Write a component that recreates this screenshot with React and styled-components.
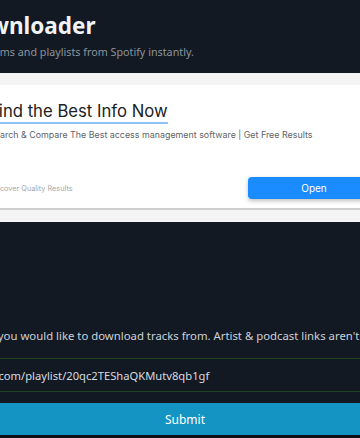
import React from "react";
import styled, { createGlobalStyle } from "styled-components";

const GlobalStyle = createGlobalStyle`
  html, body {
    margin: 0;
    padding: 0;
    background: #131922;
    overflow: hidden;
  }
  body {
    width: 360px;
    height: 438px;
  }
`;

// the screenshot is a window scrolled sideways: the page starts left of the viewport
const Page = styled.div`
  margin-left: -300px;
  width: 970px;
  display: flex;
  flex-direction: column;
  font-family: "Noto Sans", "Open Sans", sans-serif;
`;

const Header = styled.header`
  height: 73px;
  box-sizing: border-box;
  padding: 11px 0 0 175px;
`;

const Title = styled.h1`
  margin: 0;
  font-size: 22.5px;
  line-height: 30px;
  font-weight: 700;
  color: #f0f3f6;
  white-space: nowrap;
`;

const Subtitle = styled.p`
  margin: 2px 0 0 ${(p) => p.shift || 0}px;
  font-size: 10.75px;
  line-height: 18px;
  color: #8b949e;
  white-space: nowrap;
`;

const AdBand = styled.div`
  background: #f4f4f4;
  padding: 12px 278px 12px 0;
`;

const AdCard = styled.div`
  height: 125px;
  box-sizing: border-box;
  background: #fff;
  border-bottom: 2px solid #cfcfcf;
  padding: 16px 12px 9px 289px;
  display: flex;
  flex-direction: column;
  font-family: Inter, Roboto, sans-serif;
`;

const AdTitle = styled.div`
  align-self: flex-start;
  font-size: 16.7px;
  line-height: 20px;
  padding-bottom: 1px;
  color: #202124;
  border-bottom: 2px solid #8cc2f7;
  white-space: nowrap;
`;

const AdText = styled.div`
  margin-top: 4px;
  font-size: 8.9px;
  line-height: 14px;
  color: #5f6368;
  white-space: nowrap;
`;

const AdFooter = styled.div`
  margin-top: auto;
  display: flex;
  align-items: center;
  justify-content: space-between;
`;

const AdSource = styled.span`
  font-size: 7.3px;
  color: #a8a8a8;
  white-space: nowrap;
`;

const OpenButton = styled.button`
  width: 132px;
  height: 22px;
  border: none;
  border-radius: 4px;
  background: #1a8cff;
  color: #fff;
  font-family: Inter, Roboto, sans-serif;
  font-size: 10px;
  box-shadow: 0 2px 4px rgba(0, 0, 0, 0.25);
`;

const Main = styled.main`
  padding-top: 104px;
  display: flex;
  flex-direction: column;
`;

const Label = styled.label`
  padding-left: 12px;
  font-size: 11.35px;
  line-height: 20px;
  color: #c9d1d9;
  white-space: nowrap;
`;

const UrlInput = styled.input`
  margin-top: 12px;
  height: 34px;
  box-sizing: border-box;
  border: none;
  border-top: 1px solid #1f4223;
  border-bottom: 1px solid #1f4223;
  background: #131922;
  color: #d6dbe0;
  font-family: "Noto Sans", "Open Sans", sans-serif;
  font-size: 11.2px;
  padding: 0 0 0 192px;
  outline: none;
`;

const SubmitButton = styled.button`
  margin-top: 11px;
  height: 32px;
  border: none;
  background: #1394c2;
  color: #fff;
  font-family: "Noto Sans", "Open Sans", sans-serif;
  font-size: 12px;
`;

const Bottom = styled.div`
  height: 40px;
  background: #0d1117;
`;

export default function App() {
  return (
    <>
      <GlobalStyle />
      <Page>
        <Header>
          <Title>Spotify Downloader</Title>
          <Subtitle shift={13}>Download songs, albums and playlists from Spotify instantly.</Subtitle>
        </Header>
        <AdBand>
          <AdCard>
            <AdTitle>Find the Best Info Now</AdTitle>
            <AdText>Search &amp; Compare The Best access management software | Get Free Results</AdText>
            <AdFooter>
              <AdSource>Discover Quality Results</AdSource>
              <OpenButton>Open</OpenButton>
            </AdFooter>
          </AdCard>
        </AdBand>
        <Main>
          <Label htmlFor="url">
            Paste a Spotify link of the playlist, album or track that you would like to download tracks from. Artist &amp; podcast links aren't supported.
          </Label>
          <UrlInput id="url" readOnly value="https://open.spotify.com/playlist/20qc2TEShaQKMutv8qb1gf" />
          <SubmitButton>Submit</SubmitButton>
          <Bottom />
        </Main>
      </Page>
    </>
  );
}
